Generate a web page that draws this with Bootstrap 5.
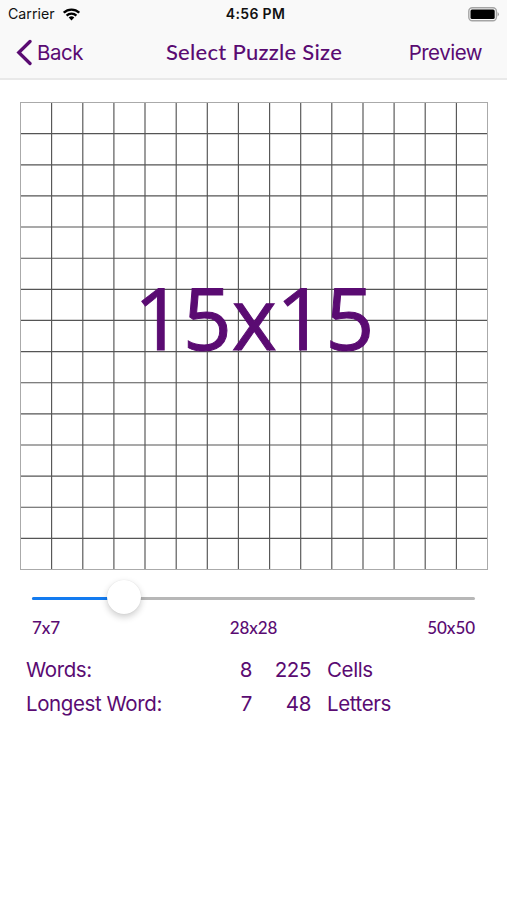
<!DOCTYPE html>
<html lang="en">
<head>
<meta charset="utf-8">
<meta name="viewport" content="width=device-width, initial-scale=1">
<title>Select Puzzle Size</title>
<link href="https://cdn.jsdelivr.net/npm/bootstrap@5.3.0/dist/css/bootstrap.min.css" rel="stylesheet">
<style>
:root { --plum: #5a0b72; }
body { font-family: Inter, "Liberation Sans", sans-serif; color: var(--plum); background: #fff; height: 900px; overflow: hidden; }
.top-area { background: #f9f9f9; height: 80px; border-bottom: 2px solid #e9e9e9; }
.status { height: 28px; color: #111; font-size: 14.2px; line-height: 28px; padding: 0 7px 0 8px; }
.side { flex: 1 1 0; }
.clock { font-weight: 600; font-size: 14px; letter-spacing: .35px; padding-left: 3px; }
.title-bar { height: 50px; padding: 0 25px 0 16px; font-size: 20.5px; letter-spacing: -.5px; line-height: 48px; }
.chevron { margin: -2px 5px 0 0; }
.page-title { font-family: Lato, sans-serif; font-weight: 500; font-size: 22px; letter-spacing: .28px; padding-left: 10px; line-height: 46px; margin-top: -3px; }
.board { margin: 22px 19px 0 20px; height: 468px; }
.board svg { display: block; }
.size-label { inset: 0 0 auto 0; top: 163px; font-family: "Open Sans", sans-serif; font-weight: 500; font-size: 86px; letter-spacing: -.3px; line-height: 104px; -webkit-text-stroke: 1px var(--plum); }
.slider-row { margin: 10px 32px 0; height: 36px; }
.track { height: 3px; background: #b7b7b7; border-radius: 2px; }
.track-fill { height: 3px; background: #137bf0; border-radius: 2px; }
.thumb { width: 34px; height: 34px; background: #fff; left: 75px; top: 0; box-shadow: 0 3px 7px rgba(0,0,0,.2), 0 0 1px rgba(0,0,0,.12); }
.ticks { margin: -2px 32px 0 32px; height: 28px; line-height: 28px; font-family: Lato, sans-serif; font-weight: 500; font-size: 17px; letter-spacing: -.05px; }
.stats { display: grid; grid-template-columns: 189px 37px 59px auto; margin: 11px 0 0 26px; font-size: 20.5px; letter-spacing: -.4px; line-height: 33.5px; }
.unit { padding-left: 16px; }
</style>
<script src="https://cdn.jsdelivr.net/npm/bootstrap@5.3.0/dist/js/bootstrap.bundle.min.js"></script>
</head>
<body>
<header class="top-area">
  <div class="status d-flex align-items-center">
    <div class="side d-flex align-items-center"><span>Carrier</span>
      <svg class="ms-2" width="17" height="13" viewBox="0 0 17 13" fill="none" stroke="#000" stroke-width="2.3"><path d="M.8 4.7a11 11 0 0 1 15.4 0M3.6 7.6a7 7 0 0 1 9.8 0"/><path d="M8.5 12.5 5.7 9.6a4 4 0 0 1 5.6 0Z" fill="#000" stroke="none"/></svg>
    </div>
    <span class="clock">4:56 PM</span>
    <div class="side d-flex justify-content-end">
      <svg width="32" height="15" viewBox="0 0 32 15"><rect x=".8" y=".8" width="27.6" height="13" rx="3.5" fill="none" stroke="#a5a5a5" stroke-width="1.4"/><rect x="2.5" y="2.6" width="24.2" height="9.4" rx="1.5"/><path d="M29.6 5a2.7 2.7 0 0 1 0 4.6Z" fill="#999"/></svg>
    </div>
  </div>
  <nav class="title-bar d-flex align-items-center">
    <div class="side d-flex align-items-center"><svg class="chevron" width="16" height="27" viewBox="0 0 16 27" fill="none" stroke="#5a0b72" stroke-width="3.3" stroke-linecap="round"><path d="M14 2.5 2.8 13.5 14 24.5"/></svg><span>Back</span></div>
    <span class="page-title">Select Puzzle Size</span>
    <div class="side text-end">Preview</div>
  </nav>
</header>
<main>
  <section class="board position-relative">
    <svg width="468" height="468" viewBox="0 0 468 468" fill="none"><path stroke="#555" stroke-width="1.15" d="M31.6.5v467M62.8.5v467M93.9.5v467M125 .5v467M156.2.5v467M187.3.5v467M218.4.5v467M249.6.5v467M280.7.5v467M311.8.5v467M343 .5v467M374.1.5v467M405.2.5v467M436.4.5v467M.5 31.6h467M.5 62.8h467M.5 93.9h467M.5 125h467M.5 156.2h467M.5 187.3h467M.5 218.4h467M.5 249.6h467M.5 280.7h467M.5 311.8h467M.5 343h467M.5 374.1h467M.5 405.2h467M.5 436.4h467"/><rect x=".5" y=".5" width="467" height="467" stroke="#aaa"/></svg>
    <div class="size-label position-absolute text-center">15x15</div>
  </section>
  <div class="slider-row position-relative d-flex align-items-center">
    <div class="track w-100"><div class="track-fill" style="width:20%"></div></div>
    <div class="thumb position-absolute rounded-circle"></div>
  </div>
  <div class="ticks d-flex"><span class="side">7x7</span><span>28x28</span><span class="side text-end">50x50</span></div>
  <section class="stats">
    <span>Words:</span><span class="text-end">8</span><span class="text-end">225</span><span class="unit">Cells</span>
    <span>Longest Word:</span><span class="text-end">7</span><span class="text-end">48</span><span class="unit">Letters</span>
  </section>
</main>
</body>
</html>
